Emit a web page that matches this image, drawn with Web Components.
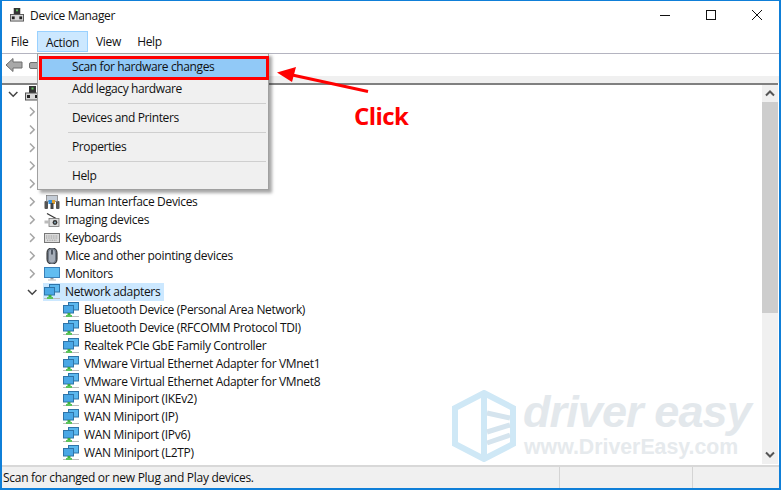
<!doctype html>
<html>
<head>
<meta charset="utf-8">
<title>Device Manager</title>
<style>
html,body{margin:0;padding:0;background:#fff;}
body{width:781px;height:490px;overflow:hidden;font-family:"Open Sans","Noto Sans",sans-serif;}
</style>
</head>
<body>
<dm-window>
    <dm-titlebar slot="title">Device Manager</dm-titlebar>
    <dm-menubar slot="menubar">
        <dm-menubutton style="--w:35px">File</dm-menubutton>
        <dm-menubutton style="--w:51px" open>Action</dm-menubutton>
        <dm-menubutton style="--w:41px">View</dm-menubutton>
        <dm-menubutton style="--w:41px">Help</dm-menubutton>
    </dm-menubar>
    <dm-toolbar slot="toolbar"></dm-toolbar>
    <dm-tree slot="tree">
        <dm-row icon="computer" state="open"></dm-row>
        <dm-row state="closed" depth="1"></dm-row>
        <dm-row state="closed" depth="1"></dm-row>
        <dm-row state="closed" depth="1"></dm-row>
        <dm-row state="closed" depth="1"></dm-row>
        <dm-row state="closed" depth="1" icon="display"></dm-row>
        <dm-row state="closed" depth="1" icon="hid">Human Interface Devices</dm-row>
        <dm-row state="closed" depth="1" icon="camera">Imaging devices</dm-row>
        <dm-row state="closed" depth="1" icon="keyboard">Keyboards</dm-row>
        <dm-row state="closed" depth="1" icon="mouse">Mice and other pointing devices</dm-row>
        <dm-row state="closed" depth="1" icon="monitor">Monitors</dm-row>
        <dm-row state="open" depth="1" icon="network" selected>Network adapters</dm-row>
        <dm-row depth="2" icon="network">Bluetooth Device (Personal Area Network)</dm-row>
        <dm-row depth="2" icon="network">Bluetooth Device (RFCOMM Protocol TDI)</dm-row>
        <dm-row depth="2" icon="network">Realtek PCIe GbE Family Controller</dm-row>
        <dm-row depth="2" icon="network">VMware Virtual Ethernet Adapter for VMnet1</dm-row>
        <dm-row depth="2" icon="network">VMware Virtual Ethernet Adapter for VMnet8</dm-row>
        <dm-row depth="2" icon="network">WAN Miniport (IKEv2)</dm-row>
        <dm-row depth="2" icon="network">WAN Miniport (IP)</dm-row>
        <dm-row depth="2" icon="network">WAN Miniport (IPv6)</dm-row>
        <dm-row depth="2" icon="network">WAN Miniport (L2TP)</dm-row>
    </dm-tree>
    <dm-statusbar slot="status">Scan for changed or new Plug and Play devices.</dm-statusbar>
    <dm-menu slot="overlay">
        <dm-menuitem active>Scan for hardware changes</dm-menuitem>
        <dm-menuitem>Add legacy hardware</dm-menuitem>
        <dm-menusep></dm-menusep>
        <dm-menuitem>Devices and Printers</dm-menuitem>
        <dm-menusep></dm-menusep>
        <dm-menuitem>Properties</dm-menuitem>
        <dm-menusep></dm-menusep>
        <dm-menuitem>Help</dm-menuitem>
    </dm-menu>
    <dm-callout slot="overlay">Click</dm-callout>
    <dm-watermark slot="overlay"></dm-watermark>
</dm-window>

<script>
const icons = {
    computer: `<rect x="4" y="0" width="7" height="7" fill="#333"/><rect x="6.5" y="1.5" width="2" height="2" fill="#5ec45e"/>
        <rect x="0.5" y="7" width="14" height="7" fill="#d8d8d8" stroke="#555"/><rect x="2" y="9" width="3" height="3" fill="#222"/><rect x="10" y="9" width="3" height="3" fill="#222"/>`,
    display: `<rect x="2" y="3" width="13" height="2" fill="#111"/>`,
    hid: `<rect x="0.5" y="7" width="3.5" height="8" rx="1" fill="#555"/><rect x="12" y="7" width="3.5" height="8" rx="1" fill="#555"/>
        <rect x="2.5" y="1.5" width="11" height="6" fill="#c4ccd6" stroke="#777" stroke-width=".7"/><rect x="4.5" y="6" width="3.5" height="4" fill="#2f8fe0"/><rect x="8" y="6" width="3" height="4" fill="#e0a030"/><rect x="6.5" y="9" width="3" height="6" fill="#444"/>`,
    camera: `<path d="M3 1.5L12 6.5" stroke="#333" stroke-width="1.2"/><rect x="5" y="6.5" width="10" height="8" fill="#ddd" stroke="#777" stroke-width=".8"/>
        <rect x="0.5" y="8.5" width="5" height="3" fill="#bbb"/><circle cx="11" cy="10.5" r="2.4" fill="#333"/><circle cx="11" cy="10.5" r="1" fill="#8ab"/>`,
    keyboard: `<rect x="0.5" y="3.5" width="15" height="9" fill="#dcdcdc" stroke="#777"/>
        <path d="M2 6h12M2 8h12M3 10.2h10" stroke="#999" stroke-width="1" stroke-dasharray="1 .7"/>`,
    mouse: `<rect x="3" y="-0.5" width="10" height="17" rx="5" fill="#6f7884" stroke="#222"/><rect x="5" y="1.5" width="6" height="13" rx="3" fill="#a6aeb9"/><rect x="7.3" y="1.5" width="1.4" height="5" fill="#2c3440"/>`,
    monitor: `<rect x="0.5" y="1.5" width="15" height="10" fill="#62bdf0" stroke="#3a80b8"/><rect x="6.5" y="12" width="3" height="1.5" fill="#999"/><rect x="4" y="13.5" width="8" height="1" fill="#bbb"/>`,
    network: `<rect x="5.5" y="0.5" width="10" height="7.5" fill="#5cb8ee" stroke="#2f74a8"/>
        <rect x="0.5" y="3.5" width="10" height="7.5" fill="#4aa8e6" stroke="#2f74a8"/>
        <rect x="4.5" y="11" width="3" height="2.5" fill="#3fae3f"/><rect x="0" y="14" width="16" height="1" fill="#bbb"/><rect x="3" y="13" width="6" height="2" fill="#5cc45c"/>`
};

function define(tag, css, html, extra){
    const template = document.createElement('template');
    template.innerHTML = `<style>${css}</style>${html}`;
    customElements.define(tag, class extends HTMLElement{
        constructor(){
            super();
            this.attachShadow({mode: 'open'}).appendChild(template.content.cloneNode(true));
        }
        connectedCallback(){
            if (extra) extra.call(this);
        }
    });
}

define('dm-window', `
    :host{display:block;position:relative;width:781px;height:490px;box-sizing:border-box;
        border:solid #0f7fd8;border-width:1px 2px 2px 2px;background:#fff;overflow:hidden;
        font:12px "Open Sans","Noto Sans",sans-serif;color:#111;letter-spacing:-.33px;}
    ::slotted([slot=overlay]){position:absolute;}
`, `
    <slot name="title"></slot>
    <slot name="menubar"></slot>
    <slot name="toolbar"></slot>
    <slot name="tree"></slot>
    <slot name="status"></slot>
    <slot name="overlay"></slot>
`);

define('dm-titlebar', `
    :host{display:flex;align-items:center;height:30px;padding:0 0 2px 8px;box-sizing:border-box;gap:6px;font-size:12px;}
    .logo{width:14px;height:14px;}
    .btns{margin-left:auto;display:flex;margin-right:-1px;}
    .btns svg{width:46px;height:28px;display:block;}
`, `
    <svg class="logo" viewBox="0 0 15 15">${icons.computer}</svg>
    <slot></slot>
    <div class="btns">
        <svg viewBox="0 0 46 28"><path d="M18 14.5h10" stroke="#111" fill="none"/></svg>
        <svg viewBox="0 0 46 28"><rect x="18.5" y="9.5" width="9" height="9" stroke="#111" fill="none"/></svg>
        <svg viewBox="0 0 46 28"><path d="M18 9l10 10M28 9l-10 10" stroke="#111" fill="none"/></svg>
    </div>
`);

define('dm-menubar', `
    :host{display:flex;height:23px;box-sizing:border-box;border-bottom:1px solid #b4b4c0;}
`, `<slot></slot>`);

define('dm-menubutton', `
    :host{display:flex;align-items:center;justify-content:center;box-sizing:border-box;width:var(--w);height:21px;}
    :host([open]){background:#cce8ff;border:1px solid #99d1ff;padding-top:2px;}
`, `<slot></slot>`);

define('dm-toolbar', `
    :host{display:block;height:22px;box-sizing:border-box;background:#fff;padding:3px 0 0 3px;}
    svg{display:block;}
`, `
    <svg width="40" height="16" viewBox="0 0 40 16">
        <path d="M1 8l7-6.5v3.500h9v6h-9v3.500z" fill="#a8a8a8" stroke="#6f6f6f"/>
        <rect x="24.500" y="5.500" width="9" height="6" rx="1.500" fill="#a8a8a8" stroke="#6f6f6f"/>
    </svg>
`);

define('dm-tree', `
    :host{display:block;position:relative;box-sizing:border-box;height:389px;overflow:hidden;
        background:#fff;border-top:7px solid #f0f0f0;}
    .band{position:absolute;top:-7px;left:0;right:0;height:1px;background:#e0e0e0;}
    .rule{height:1.5px;background:#808080;margin-right:1px;}
    .rows{padding-top:1px;}
    .bar{position:absolute;top:2px;right:1px;bottom:1px;width:16px;background:#f0f0f0;}
    .thumb{position:absolute;top:17px;left:0;right:0;height:211px;background:#cdcdcd;}
    .bar svg{position:absolute;left:0;width:16px;height:17px;}
`, `
    <div class="band"></div>
    <div class="rule"></div>
    <div class="rows"><slot></slot></div>
    <div class="bar">
        <svg style="top:0" viewBox="0 0 16 17"><path d="M4 10.500l4-4 4 4" fill="none" stroke="#555" stroke-width="2"/></svg>
        <div class="thumb"></div>
        <svg style="bottom:1px" viewBox="0 0 16 17"><path d="M4 6.500l4 4 4-4" fill="none" stroke="#555" stroke-width="2"/></svg>
    </div>
`);

define('dm-row', `
    :host{display:flex;align-items:center;height:17.95px;white-space:nowrap;}
    .chev{width:16px;height:16px;flex:none;}
    .ico{width:16px;height:16px;flex:none;margin-left:1px;}
    .lab{padding:0 4px;margin-left:1px;line-height:17.95px;}
    .sel{display:flex;align-items:center;height:100%;margin-left:3px;}
    :host([selected]) .sel{background:#cce8ff;}
`, `
    <svg class="chev" viewBox="0 0 16 16"></svg>
    <div class="sel"><svg class="ico" viewBox="0 0 16 16"></svg><span class="lab"><slot></slot></span></div>
`, function(){
    const depth = +(this.getAttribute('depth') || 0);
    const state = this.getAttribute('state');
    const chev = this.shadowRoot.querySelector('.chev');
    this.style.paddingLeft = (3 + depth * 19) + 'px';
    if (state === 'open') chev.innerHTML = '<path d="M4 6l4.200 4.200L12.400 6" fill="none" stroke="#444" stroke-width="1.500"/>';
    if (state === 'closed') chev.innerHTML = '<path d="M6 3.500l4.200 4.200L6 11.900" fill="none" stroke="#a6a6a6" stroke-width="1.500"/>';
    this.shadowRoot.querySelector('.ico').innerHTML = icons[this.getAttribute('icon')] || '';
});

define('dm-statusbar', `
    :host{display:flex;align-items:center;box-sizing:border-box;height:23px;background:#f0f0f0;
        border-top:2px solid #d8d8d8;padding-left:1px;letter-spacing:-.28px;}
    .main{width:556px;box-sizing:border-box;}
    .cell{height:21px;border-left:1px solid #d4d4d4;}
    .a{width:132px;}
`, `
    <div class="main"><slot></slot></div><div class="cell a"></div><div class="cell"></div>
`);

define('dm-menu', `
    :host{left:35px;top:52px;width:232px;height:137px;box-sizing:border-box;background:#f0f0f0;
        border:1px solid #a0a0a0;box-shadow:3px 3px 3px rgba(0,0,0,.35);display:block;padding-top:2px;letter-spacing:-.38px;}
`, `<slot></slot>`);

define('dm-menuitem', `
    :host{display:flex;align-items:center;box-sizing:border-box;height:23px;padding-left:34px;}
    :host([active]){height:24px;margin:0 -1px -3px 1px;background:#91c9f7;border:3px solid #f00;padding:0 0 3px 30px;}
`, `<slot></slot>`);

define('dm-menusep', `
    :host{display:block;height:1px;margin:3px 2px 2px 30px;background:#cfcfcf;}
`, ``);

define('dm-callout', `
    :host{left:0;top:0;width:0;height:0;display:block;}
    svg{position:absolute;left:0;top:0;}
    .t{position:absolute;left:352px;top:100px;font:bold 24px "Open Sans",sans-serif;letter-spacing:-.6px;color:#f00;line-height:30px;}
`, `
    <svg width="781" height="490" viewBox="0 0 781 490">
        <path d="M366 90.500L288 73.500" stroke="#f00" stroke-width="3" fill="none"/>
        <path d="M275 71.500L294 66l-4 15z" fill="#f00"/>
    </svg>
    <div class="t"><slot></slot></div>
`);

define('dm-watermark', `
    :host{left:0;top:0;width:0;height:0;display:block;pointer-events:none;}
    svg{position:absolute;left:449px;top:389px;}
    .a{position:absolute;left:521px;top:388px;font:italic bold 45px/46px "Liberation Sans",sans-serif;color:#e3e8ec;letter-spacing:-.9px;white-space:nowrap;}
    .b{position:absolute;left:522px;top:435px;font:bold 21.3px/22px "Liberation Sans",sans-serif;color:#e6eaed;letter-spacing:0;white-space:nowrap;}
`, `
    <svg width="66" height="72" viewBox="0 0 66 72" fill="none">
        <path d="M33 3L62 18V54L33 69L4 54V18Z" stroke="#cfe8f6" stroke-width="6"/>
        <path d="M33 3V69" stroke="#cfe8f6" stroke-width="6"/>
        <path d="M36 23L59 28M36 42L59 35M36 53L59 45" stroke="#d5e4ee" stroke-width="5"/>
    </svg>
    <div class="a">driver easy</div>
    <div class="b">www.DriverEasy.com</div>
`);
</script>
</body>
</html>
